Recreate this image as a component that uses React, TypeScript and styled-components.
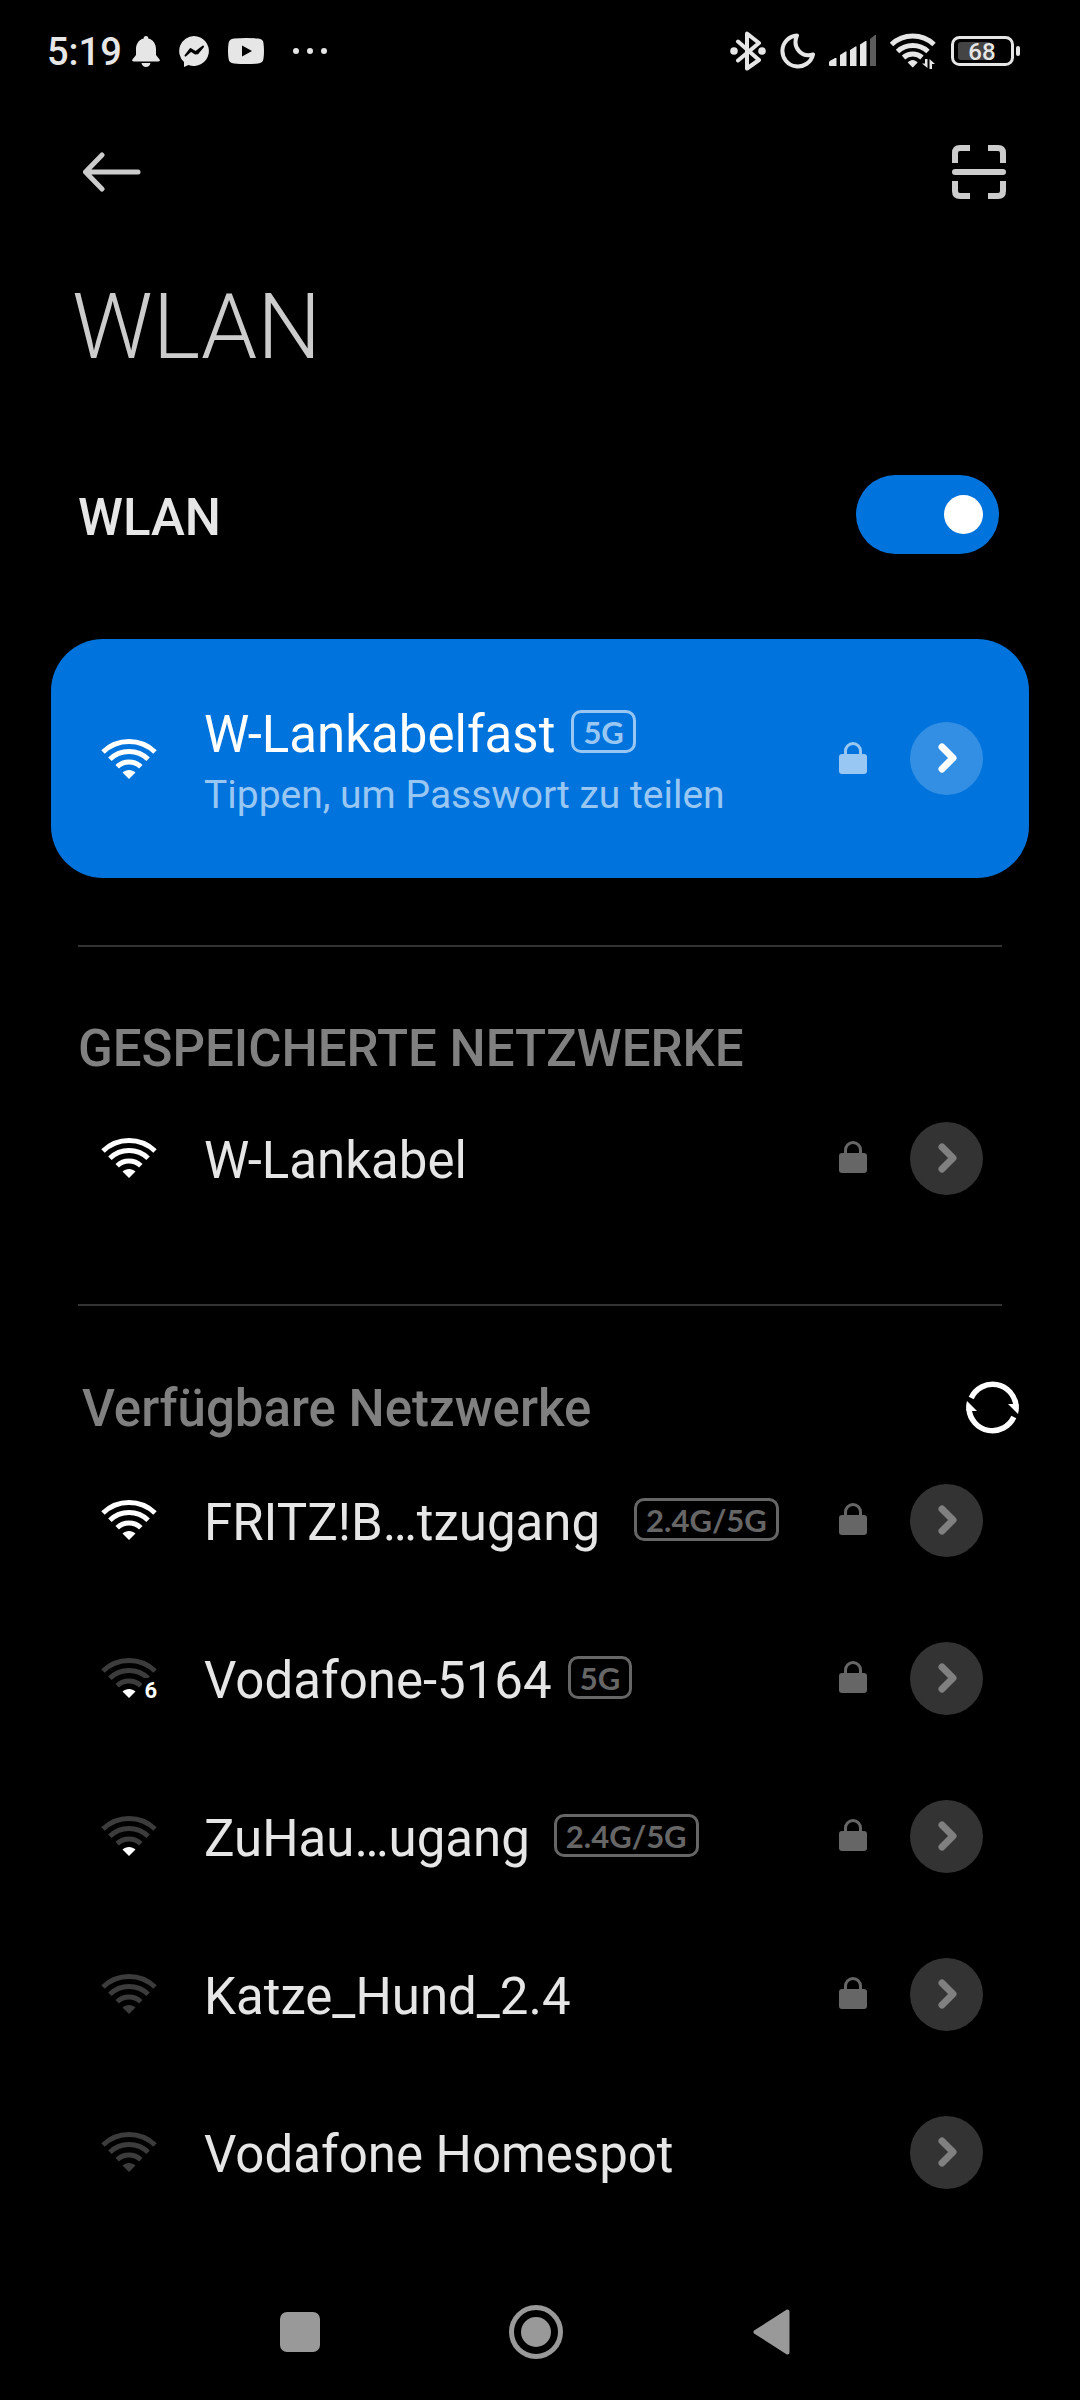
import React, { useState } from "react";
import styled, { createGlobalStyle } from "styled-components";

const color = {
  bg: "#000000",
  accent: "#0073dd",
  status: "#e6e6e6",
  title: "#cccccc",
  text: "#e6e6e6",
  muted: "#808080",
  line: "#333333",
  lock: "#666666",
  nav: "#999999",
};

const GlobalStyle = createGlobalStyle`
  *, *::before, *::after { box-sizing: border-box; }
  body {
    margin: 0;
    background: ${color.bg};
    font-family: Roboto, "Noto Sans", sans-serif;
  }
  svg { display: block; flex: none; }
`;

const Page = styled.div`
  display: flex;
  flex-direction: column;
  min-height: 100vh;
  background: ${color.bg};
  color: ${color.text};
`;

const StatusBar = styled.header`
  display: flex;
  align-items: center;
  justify-content: space-between;
  height: 102px;
  padding: 0 60px 0 47px;
  color: ${color.status};
`;

const StatusGroup = styled.div<{ $gap: number }>`
  display: flex;
  align-items: center;
  gap: ${(p) => p.$gap}px;
`;

const Clock = styled.time`
  font-size: 38px;
  font-weight: 500;
  line-height: 46px;
  margin-right: -9px;
  padding-top: 2px;
`;

const Overflow = styled.div`
  margin-left: 10px;
`;

const TopBar = styled.nav`
  display: flex;
  align-items: center;
  justify-content: space-between;
  height: 140px;
  padding: 0 74px 0 83px;
  color: ${color.title};
`;

const IconButton = styled.button`
  display: flex;
  align-items: center;
  padding: 0;
  border: 0;
  background: none;
  color: inherit;
  cursor: pointer;
`;

const Title = styled.h1`
  margin: 33px 0 0;
  padding: 0 72px;
  font-size: 90px;
  font-weight: 300;
  line-height: 106px;
  color: ${color.title};
`;

const Main = styled.main`
  padding: 0 51px;
`;

const ToggleRow = styled.div`
  display: flex;
  align-items: center;
  justify-content: space-between;
  margin: 94px 0 85px;
  padding: 0 30px 0 27px;
`;

const ToggleLabel = styled.label`
  padding-top: 6px;
  font-size: 51px;
  font-weight: 500;
  line-height: 60px;
`;

const Switch = styled.input`
  appearance: none;
  display: flex;
  align-items: center;
  justify-content: flex-start;
  width: 143px;
  height: 79px;
  margin: 0;
  padding: 0 16px;
  border-radius: 40px;
  background: ${color.line};
  cursor: pointer;

  &::before {
    content: "";
    width: 39px;
    height: 39px;
    border-radius: 50%;
    background: #ffffff;
  }

  &:checked {
    justify-content: flex-end;
    background: ${color.accent};
  }
`;

const List = styled.ul`
  margin: 0;
  padding: 0;
  list-style: none;
`;

const Row = styled.div<{ $connected?: boolean }>`
  display: flex;
  align-items: center;
  min-height: ${(p) => (p.$connected ? 239 : 158)}px;
  padding: 0 46px 0 50px;
  border-radius: ${(p) => (p.$connected ? 52 : 0)}px;
  background: ${(p) => (p.$connected ? color.accent : "transparent")};
  color: ${(p) => (p.$connected ? "#ffffff" : color.text)};
`;

const ConnectButton = styled.button`
  display: flex;
  flex: 1;
  align-items: center;
  gap: 47px;
  min-width: 0;
  padding: 0;
  border: 0;
  background: none;
  color: inherit;
  font-family: inherit;
  text-align: left;
  cursor: pointer;
`;

const Labels = styled.span`
  display: flex;
  flex-direction: column;
  gap: 7px;
  padding-top: 5px;
`;

const NameLine = styled.span<{ $gap: number }>`
  display: flex;
  align-items: center;
  gap: ${(p) => p.$gap}px;
  font-size: 51px;
  line-height: 60px;
  white-space: nowrap;
`;

const Hint = styled.span`
  font-size: 39px;
  line-height: 46px;
  color: #99c7f3;
`;

const Band = styled.span<{ $connected?: boolean }>`
  display: flex;
  align-items: center;
  height: 43px;
  margin-bottom: 6px;
  padding: 0 9px;
  border: 3px solid currentColor;
  border-radius: 10px;
  color: ${(p) => (p.$connected ? "#99c7f3" : color.lock)};
  font-family: Lato, "Open Sans", sans-serif;
  font-size: 31px;
  font-weight: 700;
  line-height: 36px;
`;

const LockSlot = styled.span<{ $connected?: boolean }>`
  margin-right: 43px;
  padding-bottom: 2px;
  color: ${(p) => (p.$connected ? "#99c7f3" : color.lock)};
`;

const DetailsButton = styled.button<{ $connected?: boolean }>`
  display: flex;
  flex: none;
  align-items: center;
  justify-content: center;
  width: 73px;
  height: 73px;
  padding: 0;
  border: 0;
  border-radius: 50%;
  background: ${(p) => (p.$connected ? "#338fe4" : color.line)};
  color: ${(p) => (p.$connected ? "#ffffff" : color.muted)};
  cursor: pointer;
`;

const Divider = styled.hr`
  height: 2px;
  margin: 67px 27px 71px;
  border: 0;
  background: ${color.line};
`;

const SectionHeader = styled.div<{ $inset: number }>`
  display: flex;
  align-items: center;
  justify-content: space-between;
  min-height: 61px;
  padding: 0 10px 0 ${(p) => p.$inset}px;
`;

const SectionTitle = styled.h2`
  margin: 0;
  font-size: 51px;
  font-weight: 500;
  line-height: 60px;
  color: ${color.muted};
`;

const RefreshButton = styled(IconButton)`
  height: 64px;
  padding-bottom: 4px;
  color: #ffffff;
`;

const NavBar = styled.footer`
  display: grid;
  grid-template-columns: repeat(3, 22%);
  justify-content: center;
  justify-items: center;
  align-items: center;
  height: 136px;
  margin-top: auto;
  padding-right: 8px;
  color: ${color.nav};
`;

const BellIcon = () => (
  <svg width="28" height="31" viewBox="0 0 28 31" fill="currentColor" aria-hidden="true">
    <path d="M14 0c1.800 0 2.300 1.100 2.300 2.600C21.500 3.700 24 8.500 24 13v6l3.400 4.200c.9 1.200.4 2.300-1 2.300H1.600c-1.400 0-1.900-1.100-1-2.300L4 19v-6c0-4.500 2.500-9.300 7.700-10.400C11.700 1.100 12.200 0 14 0z" />
    <path d="M9.500 27h9c-.5 2.500-2.300 4-4.500 4s-4-1.500-4.500-4z" />
  </svg>
);

const MessengerIcon = () => (
  <svg width="30" height="31" viewBox="0 0 30 31" aria-hidden="true">
    <path d="M15 0a15 15 0 1 1-5.500 29L5 31v-5A15 15 0 0 1 15 0z" fill="currentColor" />
    <path
      d="M6.500 19.500l5-6.500 5 3.200L24 10.500l-5.500 6.800-2.300.2-4.300-2.800z"
      fill="#000"
      stroke="#000"
      strokeWidth="2"
      strokeLinejoin="round"
    />
  </svg>
);

const VideoIcon = () => (
  <svg width="36" height="26" viewBox="0 0 36 26" aria-hidden="true">
    <path
      d="M6 .5Q18-.5 30 .5q5.500.5 5.500 5 1 7.500 0 15-.5 4.500-5.500 5-12 1-24 0-5-.5-5.500-5-1-7.500 0-15Q1 1 6 .5z"
      fill="currentColor"
    />
    <path d="M14 7.500v11l10-5.500z" fill="#000" />
  </svg>
);

const DotsIcon = () => (
  <svg width="34" height="6" viewBox="0 0 34 6" fill="currentColor" aria-hidden="true">
    <circle cx="3" cy="3" r="3" />
    <circle cx="17" cy="3" r="3" />
    <circle cx="31" cy="3" r="3" />
  </svg>
);

const BluetoothIcon = () => (
  <svg width="36" height="40" viewBox="0 0 36 40" aria-hidden="true">
    <path
      d="M8 10.500L29 29l-12 8.500v-35L29 12 8 29.500"
      fill="none"
      stroke="currentColor"
      strokeWidth="4"
      strokeLinejoin="round"
      strokeLinecap="round"
    />
    <circle cx="4" cy="20" r="3.800" fill="currentColor" />
    <circle cx="32" cy="20" r="3.800" fill="currentColor" />
  </svg>
);

const MoonIcon = () => (
  <svg width="35" height="38" viewBox="0 0 35 38" aria-hidden="true">
    <path
      d="M17 3.500A15.500 15.500 0 1 0 33 22.500C21 26 12 15 17 3.500z"
      fill="none"
      stroke="currentColor"
      strokeWidth="4"
      strokeLinejoin="round"
    />
  </svg>
);

const SignalIcon = () => (
  <svg width="47" height="32" viewBox="0 0 47 32" fill="currentColor" aria-hidden="true">
    <path d="M0 30v-3q0-1 6-4h1.500v8H1q-1 0-1-1zM11 31V20l5.500-3.500h1V31zM21 31V15l5.500-3.500h1V31zM31 31V9.500L36.500 6h1v25z" />
    <path d="M41 31V4l5-4h1v31z" fill="#5c5c5c" />
  </svg>
);

const StatusWifiIcon = () => (
  <svg width="47" height="36" viewBox="0 0 47 36" aria-hidden="true">
    <g fill="none" stroke="currentColor" strokeWidth="5">
      <path d="M1.500 11.500a31 31 0 0 1 42.500 0" />
      <path d="M7.500 18.500a22.500 22.500 0 0 1 30.500 0" />
      <path d="M13.500 24.500a14 14 0 0 1 18.500 0" />
    </g>
    <path d="M22.700 34.500l-5-5c3-3.500 7-3.500 10 0z" fill="currentColor" />
    <path d="M37.500 26v9l-5.500-4.500h3V26zM39.500 36v-10l5.500 5h-3v5z" fill="currentColor" />
  </svg>
);

const BatteryIcon = () => (
  <svg width="69" height="30" viewBox="0 0 69 30" role="img" aria-label="68 %">
    <rect x="1.500" y="1.500" width="60" height="27" rx="7" fill="none" stroke="currentColor" strokeWidth="3" />
    <rect x="7" y="6" width="33" height="18" rx="3" fill="#444" />
    <rect x="65" y="10" width="4" height="10" rx="2" fill="currentColor" />
    <text x="31" y="24" textAnchor="middle" fontFamily="Roboto, sans-serif" fontSize="24" fontWeight="500" fill="currentColor">
      68
    </text>
  </svg>
);

const BackIcon = () => (
  <svg width="58" height="40" viewBox="0 0 58 40" fill="none" stroke="currentColor" strokeWidth="5" strokeLinecap="round" strokeLinejoin="round" aria-hidden="true">
    <path d="M19 3L2.500 20 19 37M4 20h51" />
  </svg>
);

const ScanIcon = () => (
  <svg width="54" height="54" viewBox="0 0 54 54" fill="none" stroke="currentColor" strokeWidth="6" aria-hidden="true">
    <path d="M3 18V8q0-5 5-5h10M36 3h10q5 0 5 5v10M51 36v10q0 5-5 5H36M18 51H8q-5 0-5-5V36" />
    <path d="M3 27h48" strokeLinecap="round" />
  </svg>
);

const arcs = [
  "M16.200 27.800a17 17 0 0 1 23.600 0",
  "M8.900 20.200a27.500 27.500 0 0 1 38.200 0",
  "M2 13a37.500 37.500 0 0 1 52 0",
];

const WifiBox = styled.span`
  position: relative;
  flex: none;
`;

const Generation = styled.span`
  position: absolute;
  right: 0;
  bottom: -6px;
  padding-left: 2px;
  background: ${color.bg};
  color: #ffffff;
  font-size: 22px;
  font-weight: 700;
  line-height: 26px;
`;

/* level 0 leaves every part dim; each further level lights the next part from the bottom */
const WifiIcon = ({ level, generation }: { level: number; generation?: string }) => {
  const tone = (part: number) => (level >= part ? "#ffffff" : "#3c3c3c");
  return (
    <WifiBox>
      <svg width="56" height="40" viewBox="0 0 56 40" aria-hidden="true">
        <path d="M28 40l-6.500-6.500c3.500-3.500 9.500-3.500 13 0z" fill={tone(1)} />
        {arcs.map((d, i) => (
          <path key={d} d={d} fill="none" stroke={tone(i + 2)} strokeWidth="5" />
        ))}
      </svg>
      {generation && <Generation>{generation}</Generation>}
    </WifiBox>
  );
};

const LockIcon = () => (
  <svg width="28" height="32" viewBox="0 0 28 32" role="img" aria-label="Gesichert">
    <path d="M6.500 13V9a7.500 7.500 0 0 1 15 0v4" fill="none" stroke="currentColor" strokeWidth="3" />
    <rect y="12" width="28" height="20" rx="3" fill="currentColor" />
  </svg>
);

const ChevronIcon = () => (
  <svg width="31" height="31" viewBox="-15 -15 31 31" fill="none" stroke="currentColor" strokeWidth="7" strokeLinecap="round" strokeLinejoin="round" aria-hidden="true">
    <path d="M-4-11L7 0-4 11" />
  </svg>
);

const RefreshIcon = () => (
  <svg width="53" height="53" viewBox="0 0 53 53" aria-hidden="true">
    {[0, 180].map((turn) => (
      <g key={turn} transform={`rotate(${turn} 26.500 26.500)`}>
        <path d="M5.200 17A23.500 23.500 0 0 1 50 25" fill="none" stroke="currentColor" strokeWidth="5.500" />
        <path d="M42 23h10.500q1 5-.5 10z" fill="currentColor" />
      </g>
    ))}
  </svg>
);

type Network = {
  name: string;
  level: number;
  band?: string;
  bandGap?: number;
  locked?: boolean;
  generation?: string;
  hint?: string;
};

const connected: Network = {
  name: "W-Lankabelfast",
  level: 4,
  band: "5G",
  locked: true,
  hint: "Tippen, um Passwort zu teilen",
};

const saved: Network[] = [{ name: "W-Lankabel", level: 4, locked: true }];

const available: Network[] = [
  { name: "FRITZ!B…tzugang", level: 4, band: "2.4G/5G", bandGap: 34, locked: true },
  { name: "Vodafone-5164", level: 1, band: "5G", locked: true, generation: "6" },
  { name: "ZuHau…ugang", level: 1, band: "2.4G/5G", bandGap: 24, locked: true },
  { name: "Katze_Hund_2.4", level: 0, locked: true },
  { name: "Vodafone Homespot", level: 0 },
];

const NetworkRow = ({ network, active }: { network: Network; active?: boolean }) => (
  <Row $connected={active}>
    <ConnectButton type="button">
      <WifiIcon level={network.level} generation={network.generation} />
      <Labels>
        <NameLine $gap={network.bandGap ?? 16}>
          {network.name}
          {network.band && <Band $connected={active}>{network.band}</Band>}
        </NameLine>
        {network.hint && <Hint>{network.hint}</Hint>}
      </Labels>
    </ConnectButton>
    {network.locked && (
      <LockSlot $connected={active}>
        <LockIcon />
      </LockSlot>
    )}
    <DetailsButton type="button" $connected={active} aria-label={`Details zu ${network.name}`}>
      <ChevronIcon />
    </DetailsButton>
  </Row>
);

const NetworkList = ({ networks }: { networks: Network[] }) => (
  <List>
    {networks.map((n) => (
      <li key={n.name}>
        <NetworkRow network={n} />
      </li>
    ))}
  </List>
);

export default function App() {
  const [enabled, setEnabled] = useState(true);

  return (
    <Page>
      <GlobalStyle />
      <StatusBar>
        <StatusGroup $gap={19}>
          <Clock>5:19</Clock>
          <BellIcon />
          <MessengerIcon />
          <VideoIcon />
          <Overflow>
            <DotsIcon />
          </Overflow>
        </StatusGroup>
        <StatusGroup $gap={14}>
          <BluetoothIcon />
          <MoonIcon />
          <SignalIcon />
          <StatusWifiIcon />
          <BatteryIcon />
        </StatusGroup>
      </StatusBar>

      <TopBar>
        <IconButton type="button" aria-label="Zurück">
          <BackIcon />
        </IconButton>
        <IconButton type="button" aria-label="QR-Code scannen">
          <ScanIcon />
        </IconButton>
      </TopBar>

      <Title>WLAN</Title>

      <Main>
        <ToggleRow>
          <ToggleLabel htmlFor="wlan-switch">WLAN</ToggleLabel>
          <Switch
            id="wlan-switch"
            type="checkbox"
            role="switch"
            checked={enabled}
            onChange={(e) => setEnabled(e.target.checked)}
          />
        </ToggleRow>

        <NetworkRow network={connected} active />

        <Divider />
        <section>
          <SectionHeader $inset={27}>
            <SectionTitle>GESPEICHERTE NETZWERKE</SectionTitle>
          </SectionHeader>
          <NetworkList networks={saved} />
        </section>

        <Divider />
        <section>
          <SectionHeader $inset={31}>
            <SectionTitle>Verfügbare Netzwerke</SectionTitle>
            <RefreshButton type="button" aria-label="Aktualisieren">
              <RefreshIcon />
            </RefreshButton>
          </SectionHeader>
          <NetworkList networks={available} />
        </section>
      </Main>

      <NavBar>
        <IconButton type="button" aria-label="Letzte Apps">
          <svg width="40" height="40" viewBox="0 0 40 40" aria-hidden="true">
            <rect width="40" height="40" rx="7" fill="currentColor" />
          </svg>
        </IconButton>
        <IconButton type="button" aria-label="Startbildschirm">
          <svg width="54" height="54" viewBox="0 0 54 54" aria-hidden="true">
            <circle cx="27" cy="27" r="24.500" fill="none" stroke="currentColor" strokeWidth="5" />
            <circle cx="27" cy="27" r="15" fill="currentColor" />
          </svg>
        </IconButton>
        <IconButton type="button" aria-label="Zurück">
          <svg width="37" height="46" viewBox="0 0 37 46" aria-hidden="true">
            <path d="M2.500 23L34.500 2.500v41z" fill="currentColor" stroke="currentColor" strokeWidth="4" strokeLinejoin="round" />
          </svg>
        </IconButton>
      </NavBar>
    </Page>
  );
}
